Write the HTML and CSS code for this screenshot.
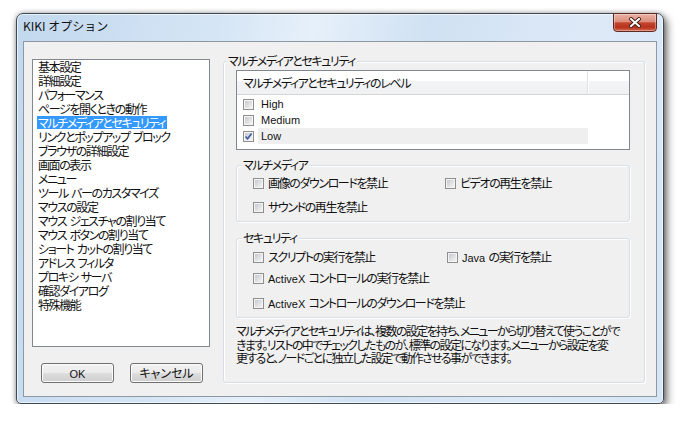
FILE: index.html
```html
<!DOCTYPE html>
<html lang="ja">
<head>
    <meta charset="UTF-8">
    <title>KIKI オプション</title>
    <link rel="stylesheet" href="styles.css">
</head>
<body>

    <div class="window">
        <div class="titlebar">
            <span class="title">KIKI オプション</span>
            <button class="close-btn">
                <svg width="12" height="11" viewBox="0 0 12 11">
                    <path d="M2 2 L10 9 M10 2 L2 9" stroke="#3a1810" stroke-width="3.8" stroke-linecap="square"/>
                    <path d="M2 2 L10 9 M10 2 L2 9" stroke="#fff" stroke-width="2" stroke-linecap="square"/>
                </svg>
            </button>
        </div>

        <div class="client">
            <div class="left-col">
                <ul class="tree">
                    <li><span>基本設定</span></li>
                    <li><span>詳細設定</span></li>
                    <li><span>パフォーマンス</span></li>
                    <li><span>ページを開くときの動作</span></li>
                    <li class="selected"><span>マルチメディアとセキュリティ</span></li>
                    <li><span>リンクとポップアップ ブロック</span></li>
                    <li><span>ブラウザの詳細設定</span></li>
                    <li><span>画面の表示</span></li>
                    <li><span>メニュー</span></li>
                    <li><span>ツール バーのカスタマイズ</span></li>
                    <li><span>マウスの設定</span></li>
                    <li><span>マウス ジェスチャの割り当て</span></li>
                    <li><span>マウス ボタンの割り当て</span></li>
                    <li><span>ショート カットの割り当て</span></li>
                    <li><span>アドレス フィルタ</span></li>
                    <li><span>プロキシ サーバ</span></li>
                    <li><span>確認ダイアログ</span></li>
                    <li><span>特殊機能</span></li>
                </ul>
                <div class="buttons">
                    <button class="btn"><span class="en">OK</span></button>
                    <button class="btn">キャンセル</button>
                </div>
            </div>

            <div class="group main-group">
                <span class="group-label">マルチメディアとセキュリティ</span>

                <div class="listview">
                    <div class="lv-header">
                        <div class="lv-col">マルチメディアとセキュリティのレベル</div>
                        <div class="lv-col rest"></div>
                    </div>
                    <div class="lv-body">
                        <div class="lv-row"><span class="check"></span><span class="lv-label en">High</span></div>
                        <div class="lv-row"><span class="check"></span><span class="lv-label en">Medium</span></div>
                        <div class="lv-row current">
                            <span class="check">
                                <svg class="tick" width="11" height="11" viewBox="0 0 11 11">
                                    <path d="M2.6 5.4 L4.6 7.8 L8.6 2.4" fill="none" stroke="#3e5b9c" stroke-width="1.6"/>
                                </svg>
                            </span>
                            <span class="lv-label en">Low</span>
                        </div>
                    </div>
                </div>

                <div class="group sub mm">
                    <span class="group-label">マルチメディア</span>
                    <div class="opt-row">
                        <label class="opt"><span class="check"></span>画像のダウンロードを禁止</label>
                        <label class="opt"><span class="check"></span>ビデオの再生を禁止</label>
                    </div>
                    <div class="opt-row">
                        <label class="opt"><span class="check"></span>サウンドの再生を禁止</label>
                    </div>
                </div>

                <div class="group sub sec">
                    <span class="group-label">セキュリティ</span>
                    <div class="opt-row">
                        <label class="opt"><span class="check"></span>スクリプトの実行を禁止</label>
                        <label class="opt"><span class="check"></span><span><span class="en">Java</span> の実行を禁止</span></label>
                    </div>
                    <div class="opt-row row2">
                        <label class="opt"><span class="check"></span><span><span class="en">ActiveX</span> コントロールの実行を禁止</span></label>
                    </div>
                    <div class="opt-row row3">
                        <label class="opt"><span class="check"></span><span><span class="en">ActiveX</span> コントロールのダウンロードを禁止</span></label>
                    </div>
                </div>

                <p class="desc">マルチメディアとセキュリティは、複数の設定を持ち、メニューから切り替えて使うことがで<br>きます。リストの中でチェックしたものが、標準の設定になります。メニューから設定を変<br>更すると、ノードごとに独立した設定で動作させる事ができます。</p>
            </div>
        </div>
    </div>

</body>
</html>
```

FILE: styles.css
```css
body {
    margin: 0;
    background-color: #fff;
    font-family: "Noto Sans CJK JP", "Liberation Sans", sans-serif;
    font-size: 12px;
    font-feature-settings: "palt";
    letter-spacing: -1.4px;
    word-spacing: 2px;
    color: #111;
}
.en {
    font-family: "Liberation Sans", sans-serif;
    font-size: 11px;
    letter-spacing: 0;
}
.window {
    margin: 13px 0 0 16px;
    width: 648px;
    height: 391px;
    box-sizing: border-box;
    padding: 0 6px 6px;
    display: flex;
    flex-direction: column;
    border: 1px solid #3e4856;
    border-radius: 7px 7px 5px 5px;
    background: linear-gradient(100deg, #c2d8ee 0%, #d5e5f5 28%, #e6f0fa 42%, #d0e1f3 58%, #dde9f7 80%, #d6e6f6 100%);
    box-shadow: 3px 4px 9px rgba(0, 0, 0, 0.55), 0 0 5px rgba(0, 0, 0, 0.3), inset 0 0 0 1px rgba(255, 255, 255, 0.65);
}
.titlebar {
    height: 27px;
    display: flex;
    align-items: flex-start;
}
.title {
    margin-top: 4px;
    line-height: 16px;
    font-feature-settings: normal;
    letter-spacing: 0;
    word-spacing: 0;
}
.close-btn {
    margin-left: auto;
    margin-top: -1px;
    width: 44px;
    height: 19px;
    padding: 0;
    display: flex;
    align-items: center;
    justify-content: center;
    border: 1px solid #5e2a22;
    border-radius: 0 0 4px 4px;
    background: linear-gradient(#e9b2a4 0%, #dc8e7c 45%, #c5472f 52%, #b8311d 78%, #d56b51 100%);
    box-shadow: inset 0 0 0 1px rgba(255, 255, 255, 0.35);
}
.client {
    flex: 1;
    display: flex;
    gap: 13px;
    padding: 17px 11px 13px 8px;
    background-color: #f0f0f0;
    border: 1px solid #8e98a3;
}
.left-col {
    width: 178px;
    display: flex;
    flex-direction: column;
}
.tree {
    list-style: none;
    margin: 0;
    height: 288px;
    box-sizing: border-box;
    padding: 0 0 0 4px;
    border: 1px solid #828790;
    background-color: #fff;
}
.tree li {
    height: 14px;
}
.tree span {
    display: inline-block;
    vertical-align: top;
    line-height: 13px;
    padding: 0 2px 0 1px;
    white-space: nowrap;
}
.tree .selected span {
    background-color: #3399ff;
    color: #fff;
}
.buttons {
    display: flex;
    gap: 16px;
    margin-top: 16px;
    padding-left: 9px;
}
.btn {
    width: 73px;
    height: 20px;
    padding: 0;
    font: inherit;
    line-height: 18px;
    color: #111;
    border: 1px solid #707070;
    border-radius: 3px;
    background: linear-gradient(#f2f2f2 0%, #ebebeb 48%, #dddddd 52%, #cfcfcf 100%);
    box-shadow: inset 0 0 0 1px #fcfcfc;
}
.group {
    position: relative;
    box-sizing: border-box;
    border: 1px solid #d5dfe5;
    border-radius: 3px;
    box-shadow: inset 1px 1px 0 #fff, 1px 1px 0 #fff;
}
.group-label {
    position: absolute;
    top: -8px;
    left: 5px;
    padding: 0 2px 0 1px;
    line-height: 14px;
    background-color: #f0f0f0;
    white-space: nowrap;
}
.main-group {
    width: 422px;
    height: 322px;
    margin-top: 2px;
    padding: 8px 14px 0 12px;
}
.main-group > .group-label {
    left: 3px;
}
.listview {
    height: 80px;
    box-sizing: border-box;
    border: 1px solid #828790;
    background-color: #fff;
}
.lv-header {
    display: flex;
    height: 24px;
    box-sizing: border-box;
    border-bottom: 1px solid #d5d5d5;
    background: linear-gradient(#fff 0%, #fff 42%, #f3f4f6 43%, #f0f1f3 100%);
}
.lv-col {
    width: 351px;
    box-sizing: border-box;
    padding-left: 6px;
    line-height: 23px;
    border-right: 1px solid #e0e2e5;
    box-shadow: 1px 0 0 #fff;
    white-space: nowrap;
}
.lv-col.rest {
    flex: 1;
    border-right: none;
    box-shadow: none;
}
.lv-body {
    padding-top: 1px;
}
.lv-row {
    height: 16px;
    display: flex;
    align-items: center;
    padding-left: 6px;
}
.lv-label {
    margin-left: 4px;
    width: 330px;
    height: 16px;
    line-height: 16px;
    padding-left: 3px;
    box-sizing: border-box;
}
.lv-row.current .lv-label {
    background-color: #efefef;
}
.check {
    position: relative;
    flex: none;
    width: 11px;
    height: 11px;
    box-sizing: border-box;
    padding: 1px;
    border: 1px solid #8f8f8f;
    background: linear-gradient(135deg, #c5c8cd, #f5f5f5) content-box, #f4f4f4;
}
.tick {
    position: absolute;
    left: -1px;
    top: -1px;
}
.sub {
    margin-top: 15px;
    padding: 9px 0 6px 16px;
}
.sub .group-label {
    left: 5px;
}
.sec {
    margin-top: 16px;
    padding-top: 10px;
}
.opt-row {
    display: flex;
    height: 16px;
    align-items: center;
}
.sec .row2 {
    margin-top: 5px;
}
.sec .row3 {
    margin-top: 9px;
}
.mm .opt-row {
    margin-bottom: 8px;
}
.mm .opt-row:last-child {
    margin-bottom: 0;
}
.opt {
    display: flex;
    align-items: center;
    gap: 4px;
    line-height: 16px;
    white-space: nowrap;
}
.mm .opt:first-child {
    width: 192px;
}
.sec .opt:first-child {
    width: 194px;
}
.desc {
    margin: 6px 0 0;
    line-height: 13.5px;
    letter-spacing: -1.6px;
    white-space: nowrap;
}
```
